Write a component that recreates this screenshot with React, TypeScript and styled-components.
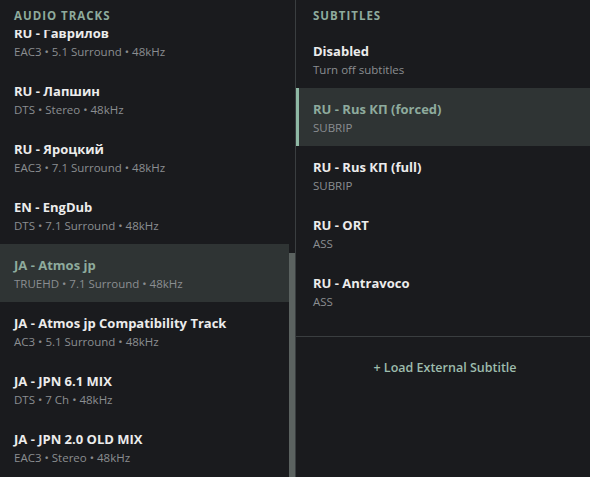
import React, { useLayoutEffect, useRef, useState } from "react";
import styled, { createGlobalStyle } from "styled-components";

const Global = createGlobalStyle`
  html, body { margin: 0; padding: 0; background: #1a1b1e; }
  body { font-family: "Open Sans", "Noto Sans", sans-serif; }
  * { box-sizing: border-box; }
`;

const Shell = styled.div`
  display: grid;
  grid-template-columns: 296px 1fr;
  width: 590px;
  height: 477px;
  background: #1a1b1e;
  overflow: hidden;
`;

const AudioPanel = styled.div`
  display: flex;
  height: 477px;
  border-right: 1px solid #3a3e40;
`;

const ScrollArea = styled.div`
  flex: 1;
  height: 100%;
  overflow-y: scroll;
  scrollbar-width: none;
  &::-webkit-scrollbar { display: none; }
`;

const ScrollTrack = styled.div`
  width: 6px;
  height: 100%;
  display: flex;
  flex-direction: column;
`;

const Thumb = styled.div`
  width: 6px;
  background: #5b6260;
  flex-shrink: 0;
`;

const SubPanel = styled.div`
  height: 477px;
  overflow: hidden;
`;

const Header = styled.div<{ $inset: number }>`
  position: sticky;
  top: 0;
  z-index: 1;
  height: 30px;
  padding-left: ${(p) => p.$inset}px;
  display: flex;
  align-items: center;
  background: #1a1b1e;
  color: #8eab9d;
  font-size: 11.5px;
  font-weight: 700;
  letter-spacing: 1px;
  text-transform: uppercase;
`;

const List = styled.div<{ $bottom: number; $divider?: boolean }>`
  padding-bottom: ${(p) => p.$bottom}px;
  border-bottom: ${(p) => (p.$divider ? "1px solid #3a3e40" : "none")};
`;

const Row = styled.div<{ $selected?: boolean; $accent?: boolean }>`
  height: 58px;
  padding: 12px 14px 10px 14px;
  border-left: ${(p) => (p.$accent ? `3px solid ${p.$selected ? "#8fb9a5" : "transparent"}` : "none")};
  background: ${(p) => (p.$selected ? "#2f3434" : "transparent")};
  display: flex;
  flex-direction: column;
  gap: 2px;
`;

const Title = styled.div<{ $selected?: boolean }>`
  font-size: 13px;
  line-height: 18px;
  font-weight: 700;
  color: ${(p) => (p.$selected ? "#8eab9d" : "#ececec")};
  white-space: nowrap;
`;

const Sub = styled.div`
  font-size: 11.5px;
  line-height: 16px;
  color: #8b8e91;
  white-space: nowrap;
`;

const LoadButton = styled.div`
  padding: 22px 0 20px 4px;
  text-align: center;
  font-size: 12.5px;
  line-height: 18px;
  font-weight: 600;
  color: #9dbcad;
`;

type Item = { title: string; sub: string; selected?: boolean };

const audio: Item[] = [
  { title: "RU - Дубляж", sub: "AC3 • 5.1 Surround • 48kHz" },
  { title: "RU - MVO", sub: "AC3 • 5.1 Surround • 48kHz" },
  { title: "RU - DVO", sub: "AC3 • Stereo • 48kHz" },
  { title: "RU - Кураж-Бамбей", sub: "EAC3 • 5.1 Surround • 48kHz" },
  { title: "RU - LostFilm", sub: "AC3 • 5.1 Surround • 48kHz" },
  { title: "RU - Пучков", sub: "AC3 • Stereo • 48kHz" },
  { title: "RU - Володарский", sub: "AC3 • Stereo • 48kHz" },
  { title: "RU - Сербин", sub: "DTS • 5.1 Surround • 48kHz" },
  { title: "RU - Живов", sub: "EAC3 • 5.1 Surround • 48kHz" },
  { title: "RU - Гаврилов", sub: "EAC3 • 5.1 Surround • 48kHz" },
  { title: "RU - Лапшин", sub: "DTS • Stereo • 48kHz" },
  { title: "RU - Яроцкий", sub: "EAC3 • 7.1 Surround • 48kHz" },
  { title: "EN - EngDub", sub: "DTS • 7.1 Surround • 48kHz" },
  { title: "JA - Atmos jp", sub: "TRUEHD • 7.1 Surround • 48kHz", selected: true },
  { title: "JA - Atmos jp Compatibility Track", sub: "AC3 • 5.1 Surround • 48kHz" },
  { title: "JA - JPN 6.1 MIX", sub: "DTS • 7 Ch • 48kHz" },
  { title: "JA - JPN 2.0 OLD MIX", sub: "EAC3 • Stereo • 48kHz" },
];

const subs: Item[] = [
  { title: "Disabled", sub: "Turn off subtitles" },
  { title: "RU - Rus КП (forced)", sub: "SUBRIP", selected: true },
  { title: "RU - Rus КП (full)", sub: "SUBRIP" },
  { title: "RU - ORT", sub: "ASS" },
  { title: "RU - Antravoco", sub: "ASS" },
];

export default function App() {
  const ref = useRef<HTMLDivElement>(null);
  const [thumb, setThumb] = useState({ top: 0, height: 0 });
  const update = () => {
    const el = ref.current;
    if (!el) return;
    const h = el.clientHeight;
    const total = el.scrollHeight;
    const height = Math.max(20, (h * h) / total);
    const top = total > h ? (el.scrollTop / (total - h)) * (h - height) : 0;
    setThumb({ top, height });
  };
  useLayoutEffect(() => {
    if (ref.current) ref.current.scrollTop = ref.current.scrollHeight;
    update();
  }, []);
  return (
    <>
      <Global />
      <Shell>
        <AudioPanel>
          <ScrollArea ref={ref} onScroll={update}>
            <Header $inset={14}>Audio Tracks</Header>
            <List $bottom={1}>
              {audio.map((a) => (
                <Row key={a.title} $selected={a.selected}>
                  <Title $selected={a.selected}>{a.title}</Title>
                  <Sub>{a.sub}</Sub>
                </Row>
              ))}
            </List>
          </ScrollArea>
          <ScrollTrack>
            <Thumb style={{ marginTop: thumb.top, height: thumb.height }} />
          </ScrollTrack>
        </AudioPanel>
        <SubPanel>
          <Header $inset={17}>Subtitles</Header>
          <List $bottom={16} $divider>
            {subs.map((s) => (
              <Row key={s.title} $accent $selected={s.selected}>
                <Title $selected={s.selected}>{s.title}</Title>
                <Sub>{s.sub}</Sub>
              </Row>
            ))}
          </List>
          <LoadButton>+ Load External Subtitle</LoadButton>
        </SubPanel>
      </Shell>
    </>
  );
}
